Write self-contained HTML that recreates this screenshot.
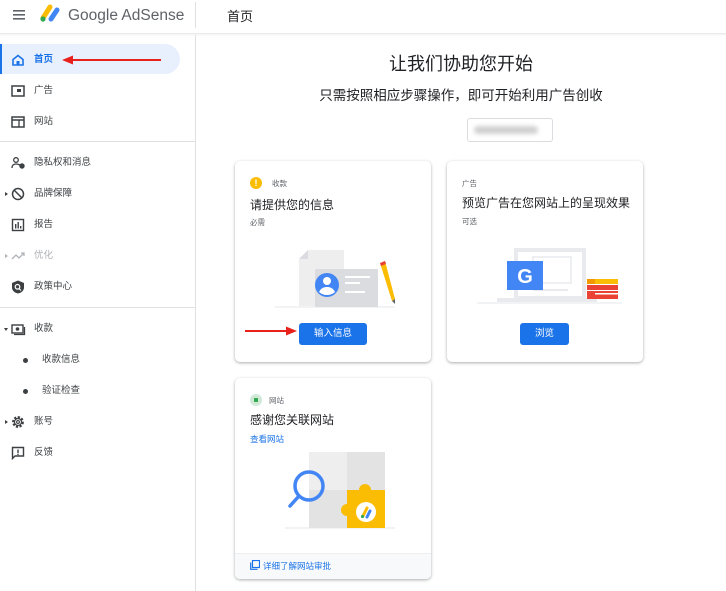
<!DOCTYPE html>
<html><head><meta charset="utf-8"><style>
*{box-sizing:border-box;margin:0;padding:0}
body{width:726px;height:591px;overflow:hidden;background:#fff;font-family:"Liberation Sans","Noto Sans CJK SC",sans-serif;color:#202124;position:relative}
.a{position:absolute}
.nav{position:absolute;left:0;font-size:9.5px;color:#3c4043;height:20px;line-height:20px;width:180px}
.nav .t{position:absolute;left:34px}
.nav svg{position:absolute;left:11px;top:3px}
.card{position:absolute;background:#fff;border-radius:5px;box-shadow:0 1px 3px rgba(60,64,67,.3),0 1px 2px rgba(60,64,67,.15);overflow:hidden}
.btn{position:absolute;background:#1a73e8;color:#fff;font-size:9.5px;text-align:center;line-height:22px;height:22px;border-radius:3px}
</style></head><body>
<div class="a" style="left:0;top:0;width:726px;height:34px;border-bottom:1px solid #e8eaed;box-shadow:0 1px 2px rgba(0,0,0,.06)"></div>
<svg class="a" style="left:13px;top:10px" width="12" height="10"><rect y="0" width="12" height="1.6" fill="#5f6368"/><rect y="4" width="12" height="1.6" fill="#5f6368"/><rect y="8" width="12" height="1.6" fill="#5f6368"/></svg>
<svg class="a" style="left:39px;top:4px" width="22" height="19"><line x1="4" y1="14" x2="11" y2="3" stroke="#fbbc04" stroke-width="5" stroke-linecap="round"/><line x1="12" y1="15" x2="18" y2="6" stroke="#4285f4" stroke-width="5" stroke-linecap="round"/><circle cx="4" cy="15" r="2.6" fill="#34a853"/></svg>
<div class="a" style="left:68px;top:5px;font-size:15.5px;color:#5f6368;line-height:22px">Google AdSense</div>
<div class="a" style="left:195px;top:2px;width:1px;height:26px;background:#e0e0e0"></div>
<div class="a" style="left:227px;top:6px;font-size:13px;color:#202124">首页</div>
<div class="a" style="left:195px;top:35px;width:1px;height:556px;background:#e0e0e0"></div>
<div class="a" style="left:0;top:44px;width:180px;height:30px;background:#e8f0fe;border-radius:0 15px 15px 0"></div>
<div class="a" style="left:0;top:44px;width:2px;height:30px;background:#1a73e8"></div>
<div class="nav" style="top:50px;color:#1a73e8;font-weight:bold"><svg width="14" height="14" viewBox="0 0 14 14"><path d="M2 6.5L7 2.5L12 6.5V12H2Z" fill="none" stroke="#1a73e8" stroke-width="1.6"/><rect x="5.5" y="8" width="3" height="4" fill="#1a73e8"/></svg><span class="t">首页</span></div>
<svg class="a" style="left:62px;top:55px" width="100" height="10"><line x1="8" y1="5" x2="99" y2="5" stroke="#e8211d" stroke-width="2"/><path d="M0 5L11 0.5V9.5Z" fill="#e8211d"/></svg>
<div class="nav" style="top:81px"><svg width="14" height="14"><rect x="1" y="2" width="12" height="10" fill="none" stroke="#3c4043" stroke-width="1.5"/><rect x="6" y="5" width="4" height="3" fill="#3c4043"/></svg><span class="t">广告</span></div>
<div class="nav" style="top:112px"><svg width="14" height="14"><rect x="1" y="2" width="12" height="10" fill="none" stroke="#3c4043" stroke-width="1.5"/><line x1="1" y1="5" x2="13" y2="5" stroke="#3c4043" stroke-width="1.5"/><line x1="8" y1="5" x2="8" y2="12" stroke="#3c4043" stroke-width="1.3"/></svg><span class="t">网站</span></div>
<div class="a" style="left:0;top:141px;width:195px;height:1px;background:#e0e0e0"></div>
<div class="nav" style="top:153px"><svg width="15" height="14"><circle cx="5" cy="4" r="2.3" fill="none" stroke="#3c4043" stroke-width="1.3"/><path d="M1 12c0-3 2-4 4-4s3 .5 4 1" fill="none" stroke="#3c4043" stroke-width="1.3"/><circle cx="11" cy="10" r="2.7" fill="#3c4043"/></svg><span class="t">隐私权和消息</span></div>
<div class="nav" style="top:184px"><svg width="14" height="14"><circle cx="7" cy="7" r="5.5" fill="none" stroke="#3c4043" stroke-width="1.5"/><line x1="3" y1="3" x2="11" y2="11" stroke="#3c4043" stroke-width="1.5"/></svg><span class="t">品牌保障</span></div>
<div class="a" style="left:5px;top:192px;border-left:3px solid #3c4043;border-top:2px solid transparent;border-bottom:2px solid transparent"></div>
<div class="nav" style="top:215px"><svg width="14" height="14"><rect x="1.5" y="1.5" width="11" height="11" fill="none" stroke="#3c4043" stroke-width="1.4"/><rect x="4" y="6" width="1.4" height="4.5" fill="#3c4043"/><rect x="6.5" y="4" width="1.4" height="6.5" fill="#3c4043"/><rect x="9" y="8" width="1.4" height="2.5" fill="#3c4043"/></svg><span class="t">报告</span></div>
<div class="nav" style="top:246px;color:#b0b3b8"><svg width="15" height="14"><path d="M1 10L5 6L8 9L13 4M10 4H13V7" fill="none" stroke="#b0b3b8" stroke-width="1.3"/></svg><span class="t">优化</span></div>
<div class="a" style="left:5px;top:254px;border-left:3px solid #b0b3b8;border-top:2px solid transparent;border-bottom:2px solid transparent"></div>
<div class="nav" style="top:277px"><svg width="14" height="14"><path d="M7 0.5L13 3V7.5C13 10.5 10.5 12.8 7 13.5C3.5 12.8 1 10.5 1 7.5V3Z" fill="#3c4043"/><circle cx="6.5" cy="6.8" r="2.3" fill="none" stroke="#fff" stroke-width="1.2"/><line x1="8" y1="8.5" x2="10" y2="10.5" stroke="#fff" stroke-width="1.2"/></svg><span class="t">政策中心</span></div>
<div class="a" style="left:0;top:307px;width:195px;height:1px;background:#e0e0e0"></div>
<div class="nav" style="top:319px"><svg width="15" height="14"><rect x="1" y="3" width="11" height="8" fill="none" stroke="#3c4043" stroke-width="1.4"/><circle cx="6.5" cy="7" r="1.8" fill="#3c4043"/><path d="M13.5 5V12.5H3" fill="none" stroke="#3c4043" stroke-width="1.3"/></svg><span class="t">收款</span></div>
<div class="a" style="left:4px;top:328px;border-top:3px solid #3c4043;border-left:2px solid transparent;border-right:2px solid transparent"></div>
<div class="a" style="left:23px;top:358px;width:5px;height:5px;border-radius:50%;background:#3c4043"></div>
<div class="nav" style="top:350px"><span class="t" style="left:42px">收款信息</span></div>
<div class="a" style="left:23px;top:389px;width:5px;height:5px;border-radius:50%;background:#3c4043"></div>
<div class="nav" style="top:381px"><span class="t" style="left:42px">验证检查</span></div>
<div class="nav" style="top:412px"><svg width="14" height="14"><circle cx="7" cy="7" r="4.8" fill="none" stroke="#3c4043" stroke-width="2.2" stroke-dasharray="2.2 1.5"/><circle cx="7" cy="7" r="3.5" fill="none" stroke="#3c4043" stroke-width="1.2"/><circle cx="7" cy="7" r="1.4" fill="none" stroke="#3c4043" stroke-width="1.1"/></svg><span class="t">账号</span></div>
<div class="a" style="left:5px;top:420px;border-left:3px solid #3c4043;border-top:2px solid transparent;border-bottom:2px solid transparent"></div>
<div class="nav" style="top:443px"><svg width="14" height="14"><path d="M1.5 1.5H12.5V10H4L1.5 12.5Z" fill="none" stroke="#3c4043" stroke-width="1.4"/><rect x="6.3" y="3.5" width="1.4" height="3.5" fill="#3c4043"/><rect x="6.3" y="7.8" width="1.4" height="1.3" fill="#3c4043"/></svg><span class="t">反馈</span></div>
<div class="a" style="left:196px;top:50px;width:530px;text-align:center;font-size:18px;color:#202124">让我们协助您开始</div>
<div class="a" style="left:196px;top:84px;width:530px;text-align:center;font-size:13.5px;color:#202124">只需按照相应步骤操作，即可开始利用广告创收</div>
<div class="a" style="left:467px;top:118px;width:86px;height:24px;border:1px solid #dadce0;border-radius:3px"></div>
<div class="a" style="left:474px;top:126px;width:64px;height:8px;border-radius:4px;background:#d0d0d0;filter:blur(2px)"></div>
<div class="card" style="left:235px;top:161px;width:196px;height:201px">
<div class="a" style="left:15px;top:16px;width:12px;height:12px;border-radius:50%;background:#fbbc04;color:#fff;font-size:9px;font-weight:bold;text-align:center;line-height:12px">!</div>
<div class="a" style="left:37px;top:17px;font-size:7.5px;color:#5f6368">收款</div>
<div class="a" style="left:15px;top:35px;font-size:12px">请提供您的信息</div>
<div class="a" style="left:15px;top:56px;font-size:7.5px;color:#5f6368">必需</div>
<svg class="a" style="left:40px;top:75px" width="120" height="75">
<rect x="0" y="70" width="120" height="2" fill="#f1f3f4"/>
<path d="M24 23L33 14H69V70H24Z" fill="#eeeeee"/><path d="M24 23L33 14V23Z" fill="#dadce0"/>
<rect x="40" y="33" width="63" height="38" fill="#dadce0"/>
<circle cx="52" cy="49" r="12" fill="#4285f4"/><circle cx="52" cy="45" r="4" fill="#fff"/><path d="M44 56c2-4 5-5 8-5s6 1 8 5a12 12 0 0 1-16 0" fill="#fff"/>
<rect x="70" y="40" width="25" height="2" fill="#fff"/><rect x="70" y="46" width="15" height="2" fill="#fff"/><rect x="70" y="55" width="20" height="2" fill="#fff"/>
<path d="M105 27l5-2 10 38-3 2Z" fill="#fbbc04"/><path d="M105 27l5-2 1 3-5 2Z" fill="#ea4335"/><path d="M117 65l3-2 0 5Z" fill="#5f6368"/>
</svg>
<div class="btn" style="left:64px;top:162px;width:68px">输入信息</div>
</div>
<svg class="a" style="left:245px;top:326px" width="52" height="10"><line x1="0" y1="5" x2="42" y2="5" stroke="#e8211d" stroke-width="2"/><path d="M52 5L41 0.5V9.5Z" fill="#e8211d"/></svg>
<div class="card" style="left:447px;top:161px;width:196px;height:201px">
<div class="a" style="left:15px;top:17px;font-size:7.5px;color:#5f6368">广告</div>
<div class="a" style="left:15px;top:33px;font-size:12px">预览广告在您网站上的呈现效果</div>
<div class="a" style="left:15px;top:55px;font-size:7.5px;color:#5f6368">可选</div>
<svg class="a" style="left:30px;top:82px" width="145" height="62">
<rect x="0" y="59" width="145" height="2" fill="#f1f3f4"/>
<rect x="37" y="5" width="72" height="52" fill="#e8eaed"/><rect x="41" y="9" width="64" height="44" fill="#fff"/>
<rect x="56" y="14" width="38" height="26" fill="#fff" stroke="#e8eaed" stroke-width="1.5"/>
<rect x="56" y="46" width="35" height="2" fill="#e8eaed"/>
<rect x="20" y="55" width="100" height="4" fill="#e8eaed"/>
<rect x="30" y="18" width="36" height="29" fill="#4285f4"/>
<text x="48" y="40" font-family="Liberation Sans" font-weight="bold" font-size="20" fill="#fff" text-anchor="middle">G</text>
<rect x="110" y="36" width="31" height="5" fill="#fbbc04"/><rect x="110" y="36" width="8" height="5" fill="#f29900"/>
<rect x="110" y="42" width="31" height="5" fill="#ea4335"/><rect x="110" y="48" width="31" height="8" fill="#ea4335"/><rect x="118" y="50" width="23" height="1.5" fill="#fff"/>
</svg>
<div class="btn" style="left:73px;top:162px;width:49px">浏览</div>
</div>
<div class="card" style="left:235px;top:378px;width:196px;height:201px">
<div class="a" style="left:15px;top:16px;width:12px;height:12px;border-radius:50%;background:#ceead6"></div>
<div class="a" style="left:19px;top:20px;width:4px;height:4px;background:#34a853"></div>
<div class="a" style="left:34px;top:17px;font-size:7.5px;color:#5f6368">网站</div>
<div class="a" style="left:15px;top:33px;font-size:12px">感谢您关联网站</div>
<div class="a" style="left:15px;top:55px;font-size:8.5px;color:#1a73e8">查看网站</div>
<svg class="a" style="left:50px;top:72px" width="110" height="82">
<rect x="0" y="77" width="110" height="2" fill="#f1f3f4"/>
<rect x="24" y="2" width="38" height="38" fill="#eeeeee"/><rect x="62" y="2" width="38" height="38" fill="#e3e3e3"/>
<rect x="24" y="40" width="38" height="38" fill="#e3e3e3"/>
<path d="M62 40H74a6 6 0 1 1 12 0H100V78H62V66a6 6 0 1 1 0-12Z" fill="#fbbc04"/>
<circle cx="81" cy="62" r="10" fill="#fff"/>
<line x1="78" y1="66" x2="82" y2="58" stroke="#fbbc04" stroke-width="3" stroke-linecap="round"/><line x1="82" y1="67" x2="85" y2="61" stroke="#4285f4" stroke-width="3" stroke-linecap="round"/><circle cx="77.5" cy="66.5" r="1.6" fill="#34a853"/>
<circle cx="24" cy="36" r="14" fill="none" stroke="#4285f4" stroke-width="3.5"/>
<line x1="14" y1="46" x2="5" y2="56" stroke="#4285f4" stroke-width="3.5" stroke-linecap="round"/>
</svg>
<div class="a" style="left:0;top:175px;width:196px;height:26px;background:#f8f9fa;border-top:1px solid #eee"></div>
<svg class="a" style="left:15px;top:182px" width="10" height="10"><rect x="2.5" y="0.5" width="7" height="7" fill="none" stroke="#1a73e8" stroke-width="1.2"/><path d="M0.7 2.5V9.3H7.5" fill="none" stroke="#1a73e8" stroke-width="1.2"/></svg>
<div class="a" style="left:28px;top:182px;font-size:8.5px;color:#1a73e8">详细了解网站审批</div>
</div>
</body></html>
